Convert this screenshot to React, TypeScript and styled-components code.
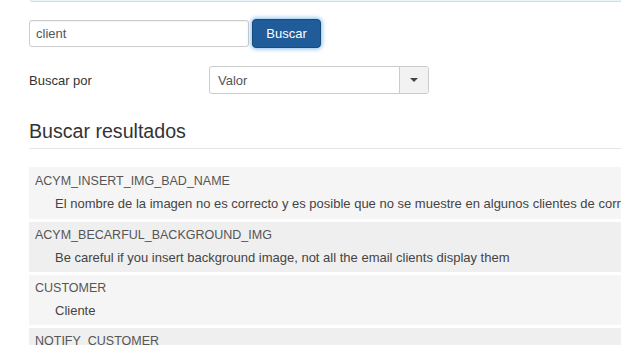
import React from "react";
import styled, { createGlobalStyle } from "styled-components";

const GlobalStyle = createGlobalStyle`
  html, body {
    margin: 0;
    padding: 0;
    background: #fff;
    overflow: hidden;
  }
  body {
    font-family: "Liberation Sans", Arial, Helvetica, sans-serif;
    color: #333;
  }
`;

const Page = styled.div`
  width: 900px;
  padding-left: 29px;
`;

const InfoStrip = styled.div`
  height: 1px;
  margin-left: 1px;
  background: #eaf4f9;
  border: 1px solid #c9e1ec;
  border-top: none;
  border-radius: 0 0 0 3px;
`;

const SearchBar = styled.form`
  display: flex;
  align-items: center;
  gap: 3px;
  margin-top: 17px;
`;

const TextInput = styled.input`
  box-sizing: border-box;
  width: 220px;
  height: 27px;
  padding: 0 6px;
  border: 1px solid #ccc;
  border-radius: 3px;
  font-family: inherit;
  font-size: 13px;
  color: #555;
  outline: none;
  box-shadow: inset 0 1px 1px rgba(0, 0, 0, 0.05);
`;

const PrimaryButton = styled.button`
  box-sizing: border-box;
  width: 69px;
  height: 29px;
  border: 1px solid #164b80;
  border-radius: 4px;
  background: #1f5c99;
  color: #fff;
  font-family: inherit;
  font-size: 13px;
  box-shadow: 0 0 4px 1px rgba(82, 160, 230, 0.7);
  cursor: pointer;
`;

const FieldRow = styled.div`
  display: flex;
  align-items: center;
  margin-top: 18px;
`;

const Label = styled.label`
  width: 180px;
  font-size: 13px;
  color: #333;
`;

const Select = styled.div`
  box-sizing: border-box;
  display: flex;
  width: 220px;
  height: 28px;
  border: 1px solid #ccc;
  border-radius: 3px;
  overflow: hidden;
`;

const SelectValue = styled.span`
  flex: 1;
  display: flex;
  align-items: center;
  padding-left: 8px;
  font-size: 13px;
  color: #555;
`;

const SelectToggle = styled.span`
  width: 28px;
  display: flex;
  align-items: center;
  justify-content: center;
  border-left: 1px solid #ccc;
  background: #f2f2f2;
`;

const Caret = styled.span`
  width: 0;
  height: 0;
  border-left: 4px solid transparent;
  border-right: 4px solid transparent;
  border-top: 4px solid #444;
`;

const Heading = styled.h2`
  margin: 26px 0 0;
  padding-bottom: 6px;
  border-bottom: 1px solid #e5e5e5;
  font-size: 19.6px;
  font-weight: normal;
  color: #333;
  line-height: 22px;
`;

const Results = styled.div`
  display: flex;
  flex-direction: column;
  gap: 3px;
  margin-top: 18px;
`;

const ResultRow = styled.div<{ $alt?: boolean; $first?: boolean }>`
  box-sizing: border-box;
  height: ${(p) => (p.$first ? 52 : 50)}px;
  padding: ${(p) => (p.$first ? 6 : 5)}px 6px 0;
  background: ${(p) => (p.$alt ? "#efefef" : "#f5f5f5")};
`;

const Key = styled.div`
  font-size: 12.5px;
  line-height: 16px;
  color: #555;
  white-space: nowrap;
`;

const Value = styled.div`
  margin-top: 7px;
  padding-left: 20px;
  font-size: 13px;
  line-height: 16px;
  color: #444;
  white-space: nowrap;
`;

const results = [
  {
    key: "ACYM_INSERT_IMG_BAD_NAME",
    value:
      "El nombre de la imagen no es correcto y es posible que no se muestre en algunos clientes de correo",
  },
  {
    key: "ACYM_BECARFUL_BACKGROUND_IMG",
    value:
      "Be careful if you insert background image, not all the email clients display them",
  },
  { key: "CUSTOMER", value: "Cliente" },
  { key: "NOTIFY_CUSTOMER", value: "Notificar al cliente" },
];

export default function App() {
  return (
    <>
      <GlobalStyle />
      <Page>
        <InfoStrip />
        <SearchBar onSubmit={(e) => e.preventDefault()}>
          <TextInput defaultValue="client" />
          <PrimaryButton type="submit">Buscar</PrimaryButton>
        </SearchBar>
        <FieldRow>
          <Label>Buscar por</Label>
          <Select>
            <SelectValue>Valor</SelectValue>
            <SelectToggle>
              <Caret />
            </SelectToggle>
          </Select>
        </FieldRow>
        <Heading>Buscar resultados</Heading>
        <Results>
          {results.map((r, i) => (
            <ResultRow key={r.key} $alt={i % 2 === 1} $first={i === 0}>
              <Key>{r.key}</Key>
              <Value>{r.value}</Value>
            </ResultRow>
          ))}
        </Results>
      </Page>
    </>
  );
}
